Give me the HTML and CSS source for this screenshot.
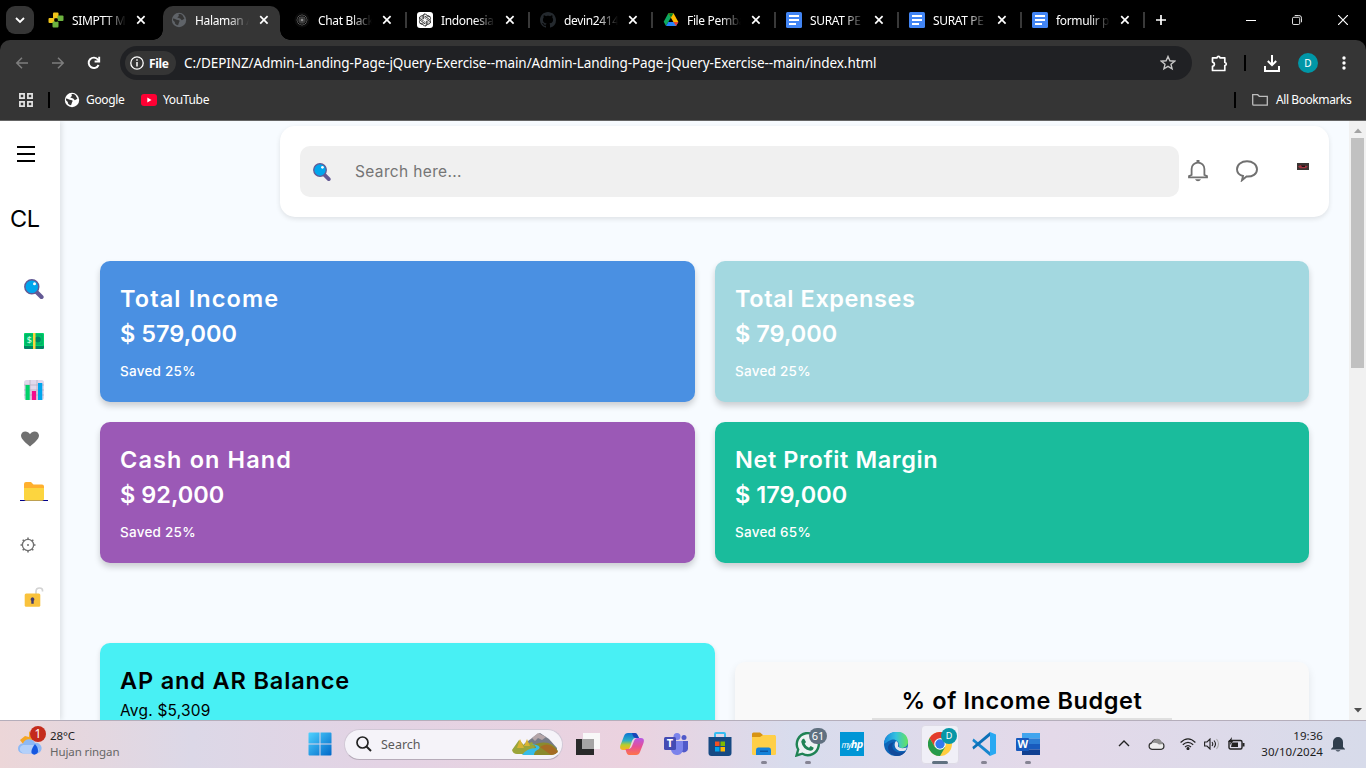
FILE: index.html
```html
<!DOCTYPE html>
<html lang="en">
<head>
<meta charset="utf-8">
<title>Halaman Admin</title>
<link rel="stylesheet" href="styles.css">
</head>
<body>
<svg class="defs" width="0" height="0">
  <defs>
    <symbol id="close" viewBox="0 0 10 10"><path d="M1.2 1.2l7.4 7.4M8.6 1.2L1.2 8.6" stroke="#fff" stroke-width="1.7" fill="none"/></symbol>
    <symbol id="globe" viewBox="0 0 16 16"><circle cx="8" cy="8" r="7.2" fill="currentColor"/><path d="M2 6.4c2 .2 3 1.4 5 1.6 1.600 0 2 .8 1.200 1.900-.6.8-.4 1.800-1.200 3.300-2.600-.3-3.200-1.500-3.200-3.200L2 8.300zM7.500 2.200c1.500-.3 3 .2 4.200 1.300l1.700 3.300-2.600 1.400-1.600-1.800-2.900-.8 1.600-1.700z" fill="var(--cut)"/></symbol>
    <symbol id="doc" viewBox="0 0 16 16"><rect width="16" height="16" rx="1.500" fill="#4285f4"/><path d="M3 4h10M3 8h10M3 12h7" stroke="#fff" stroke-width="2"/></symbol>
    <symbol id="lens" viewBox="0 0 20 20"><path d="M12.500 13l5 5" stroke="#635994" stroke-width="4.200" stroke-linecap="round"/><circle cx="7.800" cy="7.800" r="7" fill="#00a6ed" stroke="#635994" stroke-width="1.400"/><circle cx="10.500" cy="4.800" r="1.500" fill="#fff"/></symbol>
  </defs>
</svg>

<div class="screen">
  <header class="chrome">
    <div class="tabstrip">
      <div class="tab-search"><svg width="10" height="8" viewBox="0 0 10 8"><path d="M1 2l4 4 4-4" fill="none" stroke="#fff" stroke-width="1.800"/></svg></div>
      <div class="tab"><svg width="16" height="16" viewBox="0 0 16 16"><rect x="5" y=".5" width="5.500" height="6" rx="1" fill="#f0c419"/><rect x="9.500" y="3.500" width="6" height="5.500" rx="1" fill="#6db33f"/><rect x=".5" y="6" width="6" height="5" rx="1" fill="#f0c419"/><rect x="4.500" y="9.500" width="6" height="6" rx="1" fill="#6db33f"/><circle cx="8" cy="8" r="1.700" fill="#000"/></svg><span class="tab-title">SIMPTT M</span><svg class="x"><use href="#close"/></svg></div>
      <div class="tab active"><svg class="dim" width="16" height="16"><use href="#globe"/></svg><span class="tab-title">Halaman A</span><svg class="x"><use href="#close"/></svg></div>
      <div class="tab sep"><svg width="16" height="16" viewBox="0 0 16 16"><circle cx="8" cy="8" r="7.500" fill="#0b0b0b"/><path d="M8 2.500v11M2.500 8h11M4 4l8 8M12 4l-8 8M5.800 3l4.400 10M10.200 3L5.800 13M3 5.800l10 4.400M3 10.200l10-4.400" stroke="#a0a0a0" stroke-width=".8" stroke-dasharray="1 1"/></svg><span class="tab-title">Chat Black</span><svg class="x"><use href="#close"/></svg></div>
      <div class="tab sep"><svg width="16" height="16" viewBox="0 0 16 16"><rect width="16" height="16" rx="3" fill="#fff"/><g fill="none" stroke="#222" stroke-width=".75"><path id="petal" d="M5.200 7.200V4.800a2.800 2.800 0 0 1 5.300-1.200M8 6.400l2.700-1.600a2.600 2.600 0 0 1 2.600 0"/><use href="#petal" transform="rotate(60 8 8)"/><use href="#petal" transform="rotate(120 8 8)"/><use href="#petal" transform="rotate(180 8 8)"/><use href="#petal" transform="rotate(240 8 8)"/><use href="#petal" transform="rotate(300 8 8)"/></g></svg><span class="tab-title">Indonesia</span><svg class="x"><use href="#close"/></svg></div>
      <div class="tab sep"><svg width="16" height="16" viewBox="0 0 16 16"><path fill="#24292e" d="M8 0C3.580 0 0 3.580 0 8c0 3.540 2.290 6.530 5.470 7.590.4.070.55-.17.55-.38 0-.19-.01-.82-.01-1.490-2.010.37-2.530-.49-2.690-.94-.09-.23-.48-.94-.82-1.130-.28-.15-.68-.52-.01-.53.63-.01 1.080.58 1.230.82.72 1.210 1.870.87 2.330.66.070-.52.28-.87.51-1.070-1.780-.2-3.640-.89-3.640-3.950 0-.87.31-1.590.82-2.150-.08-.2-.36-1.020.08-2.120 0 0 .67-.21 2.200.82.64-.18 1.320-.27 2-.27s1.360.09 2 .27c1.530-1.040 2.200-.82 2.200-.82.44 1.100.16 1.920.08 2.120.51.56.82 1.270.82 2.150 0 3.070-1.870 3.750-3.650 3.950.29.25.54.73.54 1.480 0 1.070-.01 1.930-.01 2.200 0 .21.15.46.55.38A8.010 8.010 0 0 0 16 8c0-4.420-3.580-8-8-8z"/></svg><span class="tab-title">devin2414</span><svg class="x"><use href="#close"/></svg></div>
      <div class="tab sep"><svg width="16" height="16" viewBox="0 0 16 16"><path d="M5.300 1.200L.7 9.800 3 14l5-8.500z" fill="#0da960"/><path d="M5.300 1.200h5.200L15.400 10h-5z" fill="#ffba00"/><path d="M5.300 10h10.100L13 14H3z" fill="#2684fc"/><path d="M5.300 1.200h5.200L8 5.500z" fill="#00832d"/><path d="M10.400 10h5L13 14z" fill="#ea4335"/></svg><span class="tab-title">File Pemba</span><svg class="x"><use href="#close"/></svg></div>
      <div class="tab sep"><svg width="16" height="16"><use href="#doc"/></svg><span class="tab-title">SURAT PE</span><svg class="x"><use href="#close"/></svg></div>
      <div class="tab sep"><svg width="16" height="16"><use href="#doc"/></svg><span class="tab-title">SURAT PE</span><svg class="x"><use href="#close"/></svg></div>
      <div class="tab sep"><svg width="16" height="16"><use href="#doc"/></svg><span class="tab-title">formulir p</span><svg class="x"><use href="#close"/></svg></div>
      <div class="tab-new sep"><svg width="12" height="12" viewBox="0 0 12 12"><path d="M6 1v10M1 6h10" stroke="#fff" stroke-width="1.700"/></svg></div>
      <div class="win-controls">
        <span><svg width="10" height="10"><path d="M0 5.500h10" stroke="#fff"/></svg></span>
        <span><svg width="10" height="10" viewBox="0 0 11 11" fill="none" stroke="#fff"><rect x=".5" y="2.500" width="8" height="8" rx="1.500"/><path d="M3 .5h4.500a3 3 0 0 1 3 3V8"/></svg></span>
        <span><svg width="10" height="10"><path d="M0 0l10 10M10 0L0 10" stroke="#fff" stroke-width="1.200"/></svg></span>
      </div>
    </div>

    <div class="toolbar">
      <div class="nav">
        <svg width="14" height="14" viewBox="0 0 14 12" stroke="#7e7e7e" stroke-width="1.500" fill="none"><path d="M13 6H2M7 .8L1.800 6 7 11.200"/></svg>
        <svg width="14" height="14" viewBox="0 0 14 12" stroke="#7e7e7e" stroke-width="1.500" fill="none"><path d="M1 6h11M7 .8L12.200 6 7 11.200"/></svg>
        <svg width="14" height="14" viewBox="0 0 14 14" stroke="#fff" stroke-width="1.900" fill="none"><path d="M11.600 9A5.200 5.200 0 1 1 11 3.600L12 5"/><path d="M12.200 .8v4.700H7.600"/></svg>
      </div>
      <div class="omnibox">
        <div class="chip"><svg width="14" height="14" viewBox="0 0 14 14"><circle cx="7" cy="7" r="6.200" fill="none" stroke="#fff" stroke-width="1.300"/><path d="M7 6v4.500M7 3.300v1.500" stroke="#fff" stroke-width="1.500"/></svg><b>File</b></div>
        <span class="url">C:/DEPINZ/Admin-Landing-Page-jQuery-Exercise--main/Admin-Landing-Page-jQuery-Exercise--main/index.html</span>
        <svg class="star" width="16" height="16" viewBox="0 0 16 16"><path d="M8 1.500l1.900 4.300 4.700.4-3.600 3.100 1.100 4.600L8 11.400l-4.100 2.500L5 9.300 1.400 6.200l4.700-.4z" fill="none" stroke="#c7c7c7" stroke-width="1.400"/></svg>
      </div>
      <svg class="puzzle" width="17" height="17" viewBox="0 0 17 17"><path d="M1.500 2.800H6c.3-1.900 2.700-1.900 3 0h4.800v4.700c2 .3 2 2.700 0 3v5H1.500v-4.200c2.600-.5 2.600-3.700 0-4.200z" fill="none" stroke="#fff" stroke-width="1.700" stroke-linejoin="round"/></svg>
      <i class="divider"></i>
      <svg class="download" width="16" height="17" viewBox="0 0 16 17" fill="none" stroke="#fff" stroke-width="2"><path d="M8 0v10M3.800 6L8 10.200 12.200 6M1 11v5h14v-5"/></svg>
      <span class="avatar">D</span>
      <svg class="dots" width="4" height="14" fill="#fff"><circle cx="2" cy="2" r="1.700"/><circle cx="2" cy="7" r="1.700"/><circle cx="2" cy="12" r="1.700"/></svg>
    </div>

    <div class="bookmarks">
      <svg width="14" height="14" viewBox="0 0 14 14" fill="none" stroke="#e3e3e3" stroke-width="1.700"><path d="M.9.900h4.200v4.200H.9zM8.900.900h4.200v4.200H8.900zM.9 8.900h4.200v4.200H.9zM8.900 8.900h4.200v4.200H8.900z"/></svg>
      <i class="divider bm-div"></i>
      <svg class="bright" width="16" height="16"><use href="#globe"/></svg><span class="bm-google">Google</span>
      <svg width="16" height="12" viewBox="0 0 16 12"><rect width="16" height="12" rx="3" fill="#ff0033"/><path d="M6.300 3.500v5l4.200-2.500z" fill="#fff"/></svg><span class="bm-yt">YouTube</span>
      <div class="all"><i class="divider"></i><svg width="16" height="13" viewBox="0 0 16 13"><path d="M.7 11V1.700h5l1.600 1.600h8v8.900H1.700q-1 0-1-1.200z" fill="none" stroke="#bdbdbd" stroke-width="1.300"/></svg><span>All Bookmarks</span></div>
    </div>
  </header>

  <main class="viewport">
    <nav class="sidebar">
      <svg class="burger" width="18" height="18"><path d="M0 2h18M0 9h18M0 16h18" stroke="#000" stroke-width="2"/></svg>
      <div class="logo">CL</div>
      <ul class="menu">
        <li><svg width="20" height="20"><use href="#lens"/></svg></li>
        <li><svg width="20" height="16" viewBox="0 0 20 16"><rect y="3" width="20" height="13" rx="1" fill="#008463"/><rect width="20" height="13" rx="1" fill="#00d26a"/><rect x="1.500" y="1.500" width="17" height="10" fill="#009b65"/><rect x="2.300" y="2.300" width="15.400" height="8.400" fill="#00c768"/><circle cx="13.800" cy="6.500" r="3" fill="#008463"/><text x="2.800" y="9.800" class="dollar">$</text><path d="M9 0h2.500v16H9z" fill="#fcd53f"/></svg></li>
        <li><svg width="20" height="20" viewBox="0 0 20 20"><rect width="20" height="20" rx="2.500" fill="#e1d8ec"/><path d="M0 5h20M0 10h20M0 15h20M6 0v20M13 0v20" stroke="#b4acbc" stroke-width=".7"/><path d="M1.500 5h4.200v15H1.500z" fill="#00d26a"/><path d="M7.800 11h4.300v9H7.800z" fill="#f70a8d"/><path d="M14 3h4.300v17H14z" fill="#00a6ed"/></svg></li>
        <li><svg width="18" height="16" viewBox="0 0 18 16"><path d="M9 15.500C5.500 12.500 0 8.500 0 4.600 0 0 6.500-1.200 9 3.200 11.500-1.200 18 0 18 4.600c0 3.900-5.500 7.900-9 10.900z" fill="#707070"/></svg></li>
        <li class="folder"><svg width="20" height="19" viewBox="0 0 20 19"><path d="M0 2q0-2 2-2h5l2.500 2.500H18q2 0 2 2V12H0z" fill="#ffb02e"/><path d="M0 6h20v11q0 1.800-1.800 1.800H1.800Q0 18.800 0 17z" fill="#fcd53f"/></svg></li>
        <li><svg width="16" height="16" viewBox="0 0 16 16" fill="none" stroke="#707070"><circle cx="8" cy="8" r="5.600" stroke-width="1.300"/><circle cx="8" cy="8" r="1" fill="#707070" stroke="none"/><path d="M8 .5v2M8 13.500v2M.5 8h2M13.500 8h2M2.700 2.700l1.400 1.400M11.900 11.900l1.400 1.400M2.700 13.300l1.400-1.400M11.900 4.100l1.400-1.400" stroke-width="1.500"/></svg></li>
        <li><svg width="20" height="20" viewBox="0 0 20 20"><path d="M12 7V4.500q0-3.500 3.500-3.500T18.500 4.500" fill="none" stroke="#d3d3d3" stroke-width="1.700"/><rect x=".7" y="6.500" width="15.600" height="13.300" rx="1.500" fill="#f9c23c"/><path d="M8.500 10.300a2 2 0 0 1 1.200 3.500v3H7.300v-3a2 2 0 0 1 1.200-3.500z" fill="#433b6b"/></svg></li>
      </ul>
    </nav>

    <section class="content">
      <div class="topbar">
        <div class="search"><svg width="18" height="18" viewBox="0 0 20 20"><use href="#lens" width="20" height="20"/></svg><span>Search here...</span></div>
        <svg class="bell" width="20" height="22" viewBox="0 0 20 22"><path d="M3.600 15V9a6.400 6.400 0 0 1 12.800 0v6l2.600 1v1.400H1V16z" fill="none" stroke="#707070" stroke-width="1.800"/><path d="M10 0v2.500" stroke="#707070" stroke-width="3"/><path d="M7 19.200h6q-1 2-3 2t-3-2z" fill="#707070"/></svg>
        <svg class="bubble" width="22" height="22" viewBox="0 0 22 22"><path d="M6 20.200l1-4.200C3 15 1 12.500 1 9.200 1 4.300 5.500 1.300 11 1.300s10 3 10 7.900-4.500 7.700-10.500 7.300z" fill="none" stroke="#707070" stroke-width="1.900"/></svg>
        <svg class="photo" width="12" height="7" viewBox="0 0 12 7"><path d="M0 0h12v7H0z" fill="#3b3533"/><path d="M1 3.500q2-2 5-1.500l5 1.500L8.500 5.200H3z" fill="#a33440"/><path d="M4 2.300l4 .2v1.600H5z" fill="#171414"/></svg>
      </div>

      <div class="cards">
        <article class="card blue"><h2 class="wide">Total Income</h2><h2>$ 579,000</h2><p>Saved 25%</p></article>
        <article class="card pale"><h2 class="semiwide">Total Expenses</h2><h2>$ 79,000</h2><p>Saved 25%</p></article>
        <article class="card purple"><h2 class="wide">Cash on Hand</h2><h2>$ 92,000</h2><p>Saved 25%</p></article>
        <article class="card green"><h2 class="semiwide">Net Profit Margin</h2><h2>$ 179,000</h2><p>Saved 65%</p></article>
      </div>

      <div class="charts">
        <article class="balance"><h2>AP and AR Balance</h2><p>Avg. $5,309</p></article>
        <article class="budget"><h2 class="semiwide">% of Income Budget</h2><div class="bar"></div></article>
      </div>
    </section>

    <aside class="scrollbar"><svg width="8" height="5"><path d="M0 5l4-4.500L8 5z" fill="#a3a3a3"/></svg><div class="thumb"></div><svg width="8" height="5"><path d="M0 0l4 4.500L8 0z" fill="#505050"/></svg></aside>
  </main>

  <footer class="taskbar">
    <div class="weather">
      <div class="weather-icon">
        <svg width="26" height="26" viewBox="0 0 26 26"><path d="M11 1v6l-4-1-5 4 3 4 6 1 5-7z" fill="#f5a623"/><path d="M5 23.500a5 5 0 0 1 0-10 6.500 6.500 0 0 1 12-.5 5.200 5.200 0 0 1 2.500 10.500z" fill="#8db9f5"/><path d="M4 22.500a4 4 0 0 1 1-7.500h10l6 4-3 4.500H5z" fill="#b3d0fa"/><path d="M17 14q5 6 2 9.500-3 2.500-5.500-.5-1-3 3.500-9z" fill="#1557e0"/></svg>
        <span class="alert">1</span>
      </div>
      <div class="weather-text"><span>28°C</span><span class="muted">Hujan ringan</span></div>
    </div>

    <div class="apps">
      <div class="app"><svg width="24" height="24" viewBox="0 0 24 24"><defs><linearGradient id="win" x2="1" y2="1"><stop stop-color="#4fd2ff"/><stop offset="1" stop-color="#0067c8"/></linearGradient></defs><path d="M.5 1.500q0-1 1-1H11.500v11H.5zM12.500.500h10q1 0 1 1v10h-11zM.5 12.500h11v11h-10q-1 0-1-1zM12.500 12.500h11v10q0 1-1 1h-10z" fill="url(#win)"/></svg></div>
      <div class="task-search">
        <svg width="16" height="16" viewBox="0 0 16 16"><circle cx="6.500" cy="6.500" r="5.500" fill="none" stroke="#222" stroke-width="1.700"/><path d="M10.500 10.500l4.500 4.500" stroke="#222" stroke-width="1.900"/></svg>
        <span>Search</span>
        <svg class="scene" width="46" height="24" viewBox="0 0 46 24"><path d="M12 12L24 3l4-2 9 6 8 9v5H12z" fill="#777b87"/><path d="M20 6l6-5 8 4-4 3-4-2-3 3z" fill="#b4a5a8"/><path d="M18 14q20-9 28 5-2 4-7 4H17z" fill="#8a8b2d"/><path d="M28 15q9-7 18 5-3 3-7 3z" fill="#a56b24"/><path d="M0 18L7 8l5 5 8-3 3 5-5 7H5q-4 0-5-4z" fill="#9ba53a"/><path d="M5 16l3-9 4 9M12 14l3-7 3 7" fill="#d7b333"/><path d="M10 23q5-7 14-7 0-3-5-4 11 1 8 5-5 2-5 6z" fill="#36bce8"/></svg>
      </div>
      <div class="app"><svg width="25" height="24" viewBox="0 0 25 24"><path d="M0 7h18v16H0z" fill="#292a2a"/><path d="M7 1h17v16H7z" fill="#f8f8f8"/><path d="M6 7h12v10H6z" fill="#a5a5a5"/></svg></div>
      <div class="app"><svg width="24" height="22" viewBox="0 0 24 22"><defs><linearGradient id="cpa" y2="1" x2="0"><stop stop-color="#0c74d2"/><stop offset=".45" stop-color="#2eafc5"/><stop offset=".7" stop-color="#b8ce2b"/><stop offset="1" stop-color="#ffae23"/></linearGradient><linearGradient id="cpb" y2="1" x2="0"><stop stop-color="#b558e6"/><stop offset=".5" stop-color="#e64f95"/><stop offset="1" stop-color="#ff7448"/></linearGradient></defs><path d="M8 0h7q2 0 3 3l1 2h-4q-2 0-3 3l-2 6q-1 3-4 3H3q-4 0-2.500-5L4 3q1-3 4-3z" fill="url(#cpa)"/><path d="M16 22H9q-2 0-3-4l-.5-2H8q3 0 4-3l2-5q1-3 4-3h3q4 0 2.500 5L20 19q-1 3-4 3z" fill="url(#cpb)"/><path d="M12 0h3q2 0 3 3l1 2h-3q-2 0-3-2z" fill="#1a45b8"/></svg></div>
      <div class="app"><svg width="24" height="24" viewBox="0 0 24 24"><circle cx="20" cy="5.500" r="2.500" fill="#5059c9"/><circle cx="13" cy="4.500" r="3.500" fill="#7b83eb"/><path d="M17 9h7v7a4 4 0 0 1-7 3z" fill="#5059c9"/><path d="M7 9h12v7a6 6 0 0 1-12 2z" fill="#7b83eb"/><rect y="5" width="12" height="13" rx="1.500" fill="#444bb3"/><text x="2.800" y="15.200" class="icon-t">T</text></svg></div>
      <div class="app"><svg width="24" height="24" viewBox="0 0 24 24"><path d="M7 6V2q0-1 1-1h8q1 0 1 1v4" fill="none" stroke="#35bdf2" stroke-width="2"/><path d="M.5 5h23v16q0 3-3 3h-17q-3 0-3-3z" fill="#174a83"/><path d="M7 9.500h4.500V14H7z" fill="#f25022"/><path d="M12.500 9.500H17V14h-4.500z" fill="#7fba00"/><path d="M7 15h4.500v4.500H7z" fill="#00a4ef"/><path d="M12.500 15H17v4.500h-4.500z" fill="#ffb900"/></svg></div>
      <div class="app run"><svg width="24" height="24" viewBox="0 0 24 24"><path d="M0 2q0-1.500 1.500-1.500H8L11 3h12v8H0z" fill="#d79313"/><path d="M0 5h8l3-2h11.500q1.500 0 1.500 1.500V22q0 1-1.500 1h-21Q0 23 0 22z" fill="#ffcf48"/><path d="M4 23v-5q0-2.500 2-2.500h11q2 0 2 2.500v5z" fill="#1581d8"/><path d="M8 18.500h8v1.500H8z" fill="#0b57a4"/></svg></div>
      <div class="app run"><svg width="26" height="26" viewBox="0 0 26 26"><path d="M1.500 24.500l1.700-6a11 11 0 1 1 4.200 4.200z" fill="#edf2f3" stroke="#1f8354" stroke-width="2.400"/><path d="M9 7.500l2 3.500-1.300 1.700q1.600 3 4.300 4l1.700-1.700 3 1.700q-.5 3-3.500 3-7.500-1.500-9-9 .5-3 2.800-3.200z" fill="#1f8354"/></svg><span class="count">61</span></div>
      <div class="app"><div class="hp">my<b>hp</b></div></div>
      <div class="app"><svg width="24" height="24" viewBox="0 0 24 24"><defs><linearGradient id="eg" x2="1"><stop stop-color="#1688dc"/><stop offset=".5" stop-color="#35c1df"/><stop offset="1" stop-color="#65e45d"/></linearGradient></defs><circle cx="12" cy="12" r="12" fill="#0d65b8"/><path d="M0 11C2-4 24-4 24 10c0 5-5 7-9 5.500 1-6-4-9-8-7.500-4 1-6 5-7 3z" fill="url(#eg)"/><path d="M10 10q-4 5 1 9 5 3 11 0-4 6-11 4.800Q4 22 4 15q1-4 6-5z" fill="#114a9b"/><path d="M12 9q3 1 2 5.500 2 2.700 9 1l-1.500 3q-7 2-10-2.500Q9.500 12 12 9z" fill="#e4e4ef"/></svg></div>
      <div class="app selected"><svg width="24" height="24" viewBox="0 0 24 24"><circle cx="12" cy="12" r="12" fill="#ffcd40"/><path d="M1.600 6A12 12 0 0 1 22.400 6H12L6.800 15z" fill="#e33b2e"/><path d="M1.600 6A12 12 0 0 0 12 24l5.200-9H6.800z" fill="#269a4b"/><circle cx="12" cy="12" r="5.800" fill="#fff"/><circle cx="12" cy="12" r="4.700" fill="#3379ef"/></svg><span class="profile">D</span></div>
      <div class="app run"><svg width="24" height="24" viewBox="0 0 24 24"><path d="M1.500 6.500L18 20v4L.3 9z" fill="#1686ce"/><path d="M1.500 17.500L18 4V0L.3 15z" fill="#0b70b8"/><path d="M18 0l6 2.500v19L18 24V0z" fill="#29a9f2"/></svg></div>
      <div class="app run"><svg width="24" height="22" viewBox="0 0 24 22"><path d="M6 0h18v5.500H6z" fill="#41a5ee"/><path d="M6 5.500h18V11H6z" fill="#2b7cd3"/><path d="M6 11h18v5.500H6z" fill="#185abd"/><path d="M6 16.500h18V22H6z" fill="#103f91"/><rect y="5" width="13" height="13" rx="1" fill="#185abd"/><text x="1.400" y="15.200" class="icon-t">W</text></svg></div>
    </div>

    <div class="tray">
      <svg width="12" height="7" viewBox="0 0 12 7"><path d="M1 6l5-5 5 5" fill="none" stroke="#222" stroke-width="1.400"/></svg>
      <svg class="cloud" width="17" height="12" viewBox="0 0 17 12"><path d="M4 11.300a3.300 3.300 0 0 1-.3-6.500A5 5 0 0 1 13 4.500a3.500 3.500 0 0 1 .5 6.800z" fill="#eee" stroke="#333" stroke-width="1.200"/><path d="M4 5q5-1 7 1.500L15 6Q12 0 8 1 5 2 4 5z" fill="#909090"/></svg>
      <svg class="wifi" width="16" height="12" viewBox="0 0 16 12" fill="none" stroke="#222" stroke-width="1.200"><path d="M.6 4.500q7.400-7.200 14.800 0M2.800 6.800q5.200-5 10.400 0M5 9q3-2.800 6 0"/><circle cx="8" cy="10.500" r="1" fill="#222"/></svg>
      <svg class="sound" width="16" height="12" viewBox="0 0 16 12" fill="none" stroke="#222" stroke-width="1.100"><path d="M.6 4H3l3-3v10L3 8H.6zM8 4q1.500 2 0 4M10 2.500q3 3.500 0 7"/><path d="M12.500 1q4 5 0 10" stroke="#aaa"/></svg>
      <svg class="battery" width="17" height="13" viewBox="0 0 17 13"><rect x="1" y="3.500" width="13" height="8.500" rx="1.500" fill="none" stroke="#222" stroke-width="1.400"/><path d="M4 5.500h6v4.500H3zM14.500 6h2v3.500h-2z" fill="#222"/><path d="M4 0L0 5h2.500L2 8l4-5H3.500z" fill="#222"/></svg>
      <div class="clock"><span class="time">19:36</span><span class="date">30/10/2024</span></div>
      <svg class="notify" width="14" height="16" viewBox="0 0 14 16"><path d="M2 11V6a5 5 0 0 1 10 0v5l2 2v.6H0V13z" fill="#303e4d"/><path d="M4.500 14.300h5q-2.500 2.400-5 0z" fill="#303e4d"/></svg>
    </div>
  </footer>
</div>
</body>
</html>
```
FILE: styles.css
```css
* { box-sizing: border-box; }
body, h2, p, ul { margin: 0; padding: 0; }
ul { list-style: none; }
body { overflow: hidden; font-family: "Noto Sans", "Open Sans", sans-serif; }
svg { display: block; flex: none; }
span, p, h2 { white-space: nowrap; }
.defs { position: absolute; }
.screen { width: 1366px; height: 768px; display: flex; flex-direction: column; overflow: hidden; }

/* Browser frame */
.chrome { height: 121px; flex: none; background: #000; color: #fff; font-size: 12px; }
.tabstrip { height: 40px; display: flex; align-items: center; padding-left: 6px; }
.tab-search { width: 28px; height: 28px; border-radius: 9px; background: #353535; display: grid; place-items: center; margin-right: 6px; }
.tab { width: 123px; height: 34px; margin-top: 6px; padding: 0 0 6px 8px; display: flex; align-items: center; flex: none; position: relative; }
.sep::before { content: ""; position: absolute; left: -4px; top: 6px; width: 2px; height: 16px; background: #393939; }
.active + .sep::before { display: none; }
.tab-title { width: 54px; margin-left: 8px; overflow: hidden; letter-spacing: -.35px; -webkit-mask: linear-gradient(90deg, #000 62%, transparent); mask: linear-gradient(90deg, #000 62%, transparent); }
.x { width: 10px; height: 10px; margin-left: 10px; }
.active { background: #353535; border-radius: 10px 10px 0 0; width: 117px; margin-right: 6px; }
.active::before, .active::after { content: ""; position: absolute; bottom: 0; width: 10px; height: 10px; }
.active::before { left: -10px; background: radial-gradient(circle at 0 0, transparent 9.500px, #353535 10px); }
.active::after { right: -10px; background: radial-gradient(circle at 100% 0, transparent 9.500px, #353535 10px); }
.dim { color: #5f6368; --cut: #353535; }
.bright { color: #fff; --cut: #353535; }
.tab-new { position: relative; width: 28px; height: 28px; display: grid; place-items: center start; padding-left: 8px; }
.win-controls { margin-left: auto; display: flex; }
.win-controls span { width: 46px; height: 40px; display: grid; place-items: center; }

.toolbar { height: 46px; background: #353535; border-radius: 10px 10px 0 0; display: flex; align-items: center; padding-left: 15px; }
.nav { width: 105px; display: flex; gap: 22px; }
.omnibox { width: 1072px; height: 34px; border-radius: 17px; background: #202124; display: flex; align-items: center; padding: 0 16px 0 5px; }
.chip { width: 51px; height: 24px; border-radius: 12px; background: #353535; display: flex; align-items: center; gap: 5px; padding-left: 5px; letter-spacing: -.3px; }
.url { margin-left: 8px; font-size: 13.500px; letter-spacing: -.08px; }
.star { margin-left: auto; }
.puzzle { margin-left: 19px; }
.divider { width: 2px; height: 16px; background: #000; flex: none; }
.puzzle + .divider { margin-left: 16px; }
.download { margin-left: 18px; }
.avatar { width: 20px; height: 20px; border-radius: 50%; background: #0097a7; margin-left: 18px; display: grid; place-items: center; font-size: 10px; }
.dots { margin-left: 24px; }

.bookmarks { height: 35px; background: #353535; border-bottom: 1px solid #656565; display: flex; align-items: center; padding: 0 15px 7px 19px; }
.bm-div { margin: 0 14px 0 15px; }
.bm-google { width: 40px; margin: 0 15px 0 6px; letter-spacing: -.35px; }
.bm-yt { margin-left: 6px; letter-spacing: -.35px; }
.all { margin-left: auto; display: flex; align-items: center; }
.all svg { margin: 0 8px 0 16px; }
.all span { width: 75px; letter-spacing: -.42px; }

/* Dashboard */
.viewport { height: 599px; flex: none; overflow: hidden; display: flex; background: #f7fbff; font-family: Inter, "Open Sans", sans-serif; }
.sidebar { width: 60px; flex: none; background: #fff; box-shadow: 2px 0 5px rgba(0,0,0,.1); padding-top: 24px; position: relative; }
.burger { margin-left: 17px; }
.logo { margin: 41px 0 0 10px; height: 30px; line-height: 30px; font-size: 23.500px; letter-spacing: -.5px; }
.menu { margin-top: 33px; display: grid; grid-template-rows: 44px 60px 38px 60px 45px 62px 42px; }
.menu li { display: flex; align-items: center; padding-left: 24px; }
.menu li:nth-child(4) { padding-left: 21px; }
.menu li:nth-child(6) { padding-left: 20px; }
.folder { background: linear-gradient(#00008b, #00008b) 20px 31px / 28px 1px no-repeat; }
.content { width: 1289px; flex: none; }
.topbar { width: 1049px; height: 91px; margin: 5px 0 0 220px; padding: 20px; background: #fff; border-radius: 15px; box-shadow: 0 2px 5px rgba(0,0,0,.1); display: flex; }
.search { width: 879px; height: 51px; background: #f0f0f0; border-radius: 10px; display: flex; align-items: center; padding-left: 13px; color: #757575; font-size: 15.500px; }
.search span { margin-left: 24px; letter-spacing: .35px; }
.bell { margin: 14px 0 0 9px; }
.bubble { margin: 14px 0 0 28px; }
.photo { margin: 17px 0 0 39px; }

.cards { margin: 44px 40px 0 40px; display: grid; grid-template-columns: 595px 594px; gap: 20px; }
.card { height: 141px; border-radius: 10px; padding: 20px; color: #fff; box-shadow: 0 4px 6px rgba(0,0,0,.18); }
.card h2, .charts h2 { font-size: 23.500px; font-weight: 600; line-height: 35px; }
.card h2.wide { letter-spacing: 1.120px; }
.card h2.semiwide, .charts h2.semiwide { letter-spacing: .6px; }
.card p { font-size: 13.500px; font-weight: 500; line-height: 21px; margin-top: 10px; letter-spacing: .25px; }
.blue { background: #4a90e2; }
.pale { background: #a3d8e0; }
.purple { background: #9b59b6; }
.green { background: #1abc9c; }
.charts { margin: 80px 40px 0; display: grid; grid-template-columns: 615px 574px; gap: 20px; }
.balance { height: 200px; padding: 20px; background: #48f0f4; border-radius: 10px; box-shadow: 0 2px 5px rgba(0,0,0,.12); }
.charts .balance h2 { letter-spacing: .85px; }
.balance p { font-size: 15.500px; line-height: 26px; letter-spacing: .2px; }
.budget { height: 200px; margin-top: 19px; padding-top: 21px; background: #f9f9f9; border-radius: 10px; box-shadow: 0 4px 8px rgba(0,0,0,.09); text-align: center; }
.bar { width: 300px; height: 20px; margin: 0 auto; background: #e0e0e0; }
.scrollbar { margin-left: auto; width: 17px; background: #f1f1f1; display: flex; flex-direction: column; align-items: center; padding: 7px 0; }
.thumb { width: 13px; height: 230px; margin: 5px 0 auto; background: #c1c1c1; }

/* Taskbar */
.taskbar { height: 48px; border-top: 1px solid #b5aebb; background: linear-gradient(90deg, #ecd6d8 0, #dcd8e7 14%, #e3d3e4 28%, #ebd2df 46%, #d8dced 58%, #e4d9e9 77%, #d7dbea 100%); display: flex; color: #1d1d1d; font-size: 12px; }
.weather { width: 301px; padding-left: 18px; display: flex; }
.weather-icon { position: relative; width: 32px; padding-top: 9px; }
.alert { position: absolute; left: 12px; top: 5px; width: 16px; height: 16px; border-radius: 50%; background: #c42b1c; color: #fff; text-align: center; line-height: 16px; }
.weather-text { display: flex; flex-direction: column; padding-top: 7px; line-height: 16px; font-size: 11.500px; letter-spacing: -.1px; }
.muted { color: #666; }
.apps { display: flex; align-items: center; height: 46px; }
.app { width: 44px; height: 47px; display: grid; place-items: center; position: relative; }
.apps > .app:first-child { width: 37px; }
.task-search { width: 219px; height: 31px; margin: 0 3px 0 6px; border-radius: 16px; background: #f5f3f9; border: 1px solid #d1c8d6; border-bottom-color: #b7acba; display: flex; align-items: center; padding: 0 4px 0 11px; color: #5a5a5a; font-size: 12.500px; }
.task-search span { margin-left: 9px; }
.scene { margin-left: auto; }
.run::after { content: ""; position: absolute; left: 19px; bottom: 4px; width: 6px; height: 3px; border-radius: 2px; background: #858493; }
.selected::before { content: ""; position: absolute; inset: 4px 3px; background: #f0eff7; border: 1px solid #dedbe6; border-radius: 4px; }
.selected svg { position: relative; }
.selected::after { content: ""; position: absolute; left: 14px; bottom: 4px; width: 16px; height: 3px; border-radius: 2px; background: #607180; }
.count, .profile { position: absolute; left: 23px; top: 7px; height: 16px; border-radius: 8px; color: #fff; line-height: 16px; text-align: center; }
.count { width: 18px; background: #607080; font-size: 11px; }
.profile { width: 16px; background: #0797a7; font-size: 9px; }
.hp { width: 24px; height: 24px; background: #0096d6; color: #fff; font: italic 8px/24px "Noto Sans", sans-serif; text-align: center; letter-spacing: -.7px; }
.hp b { font-size: 11px; }
.icon-t { font: bold 11px "Noto Sans", sans-serif; fill: #fff; }
.dollar { font: 9px "Noto Sans", sans-serif; fill: #d7ffe9; }
.tray { margin-left: auto; padding: 0 21px 2px 0; display: flex; align-items: center; }
.cloud { margin-left: 18px; }
.wifi { margin-left: 15px; }
.sound { margin-left: 8px; }
.battery { margin-left: 8px; }
.clock { width: 78px; display: flex; flex-direction: column; align-items: flex-end; line-height: 16px; font-size: 11.500px; letter-spacing: .05px; }
.notify { margin-left: 8px; }
```
